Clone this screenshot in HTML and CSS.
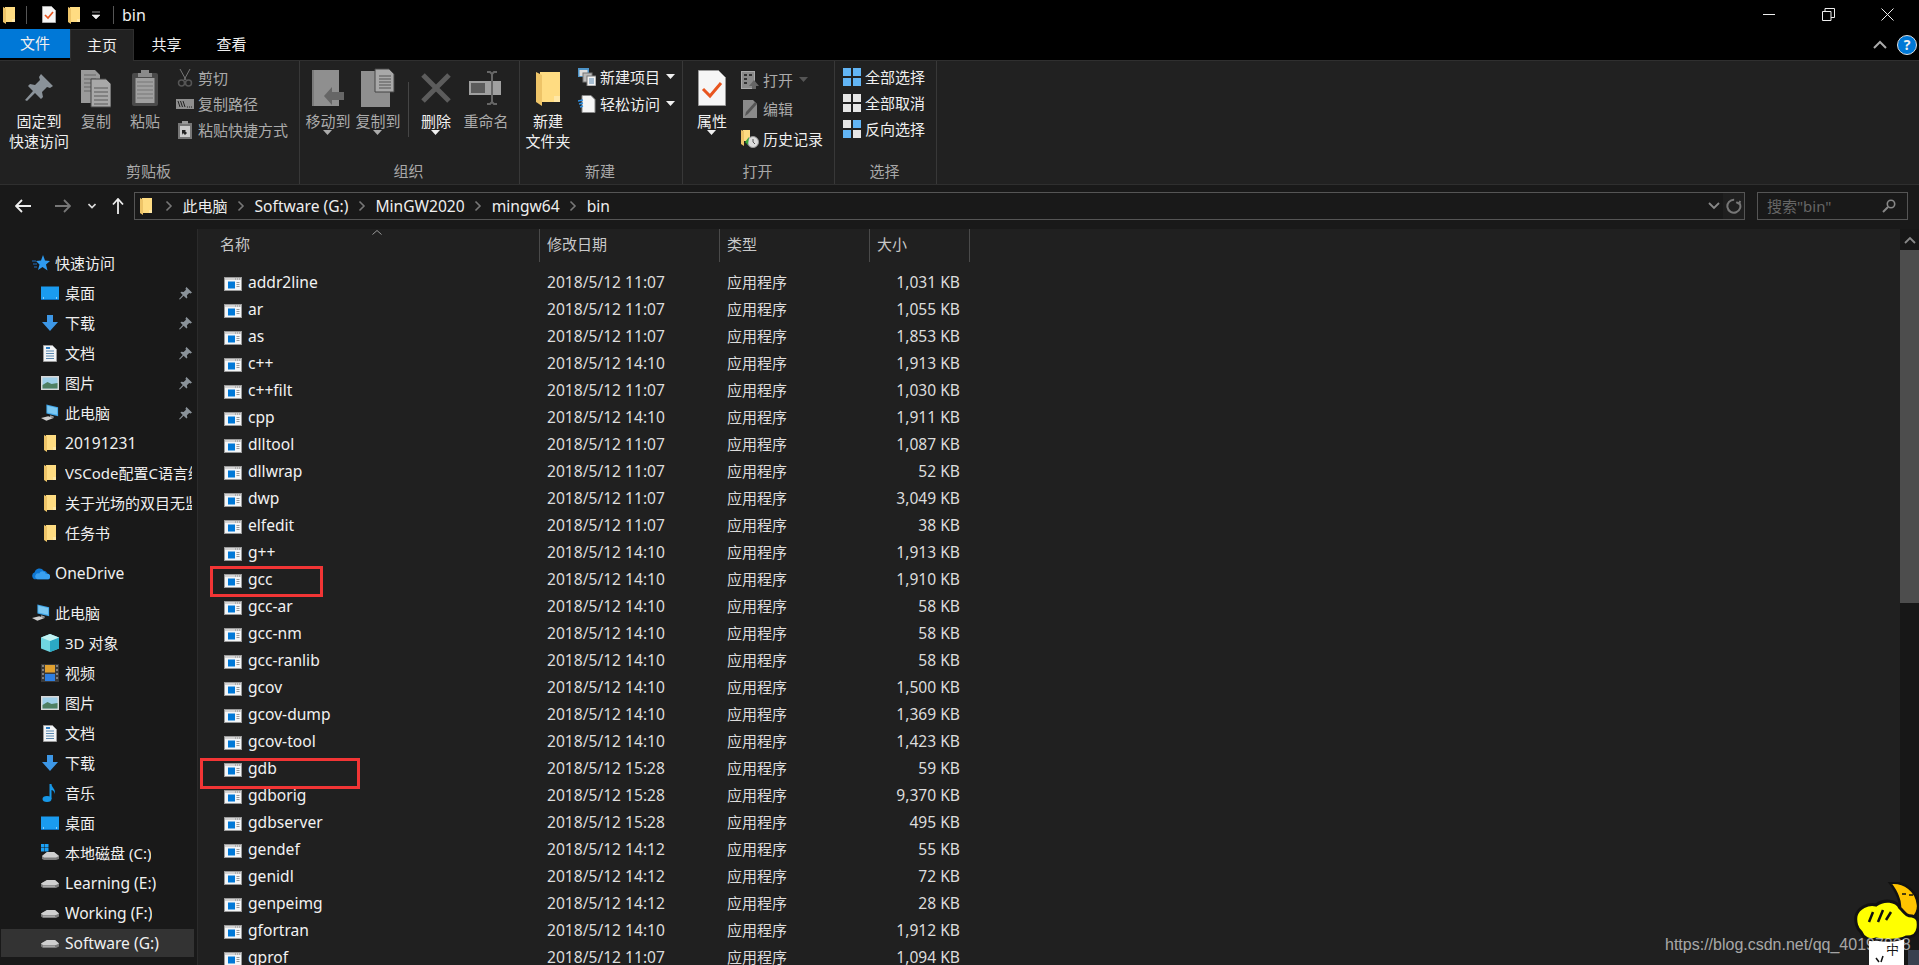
FILE: index.html
```html
<!DOCTYPE html>
<html lang="zh-CN">
<head>
    <meta charset="UTF-8">
    <title>bin</title>
    <link rel="stylesheet" href="styles.css">
</head>
<body>
    <svg class="defs" width="0" height="0">
        <symbol id="exe" viewBox="0 0 18 14">
            <rect x=".500" y=".500" width="17" height="13" fill="#f4f6f8" stroke="#9a9a9a"/>
            <rect x="1" y="1" width="16" height="2" fill="#d4d4d4"/>
            <path d="M11 2h1M13 2h1M15 2h1" stroke="#8a8a8a"/>
            <rect x="4" y="4.500" width="7" height="7" fill="#0078d7"/>
            <path d="M12.500 5.500h3M12.500 7.500h3M12.500 9.500h3" stroke="#9a9a9a"/>
        </symbol>
        <symbol id="folder" viewBox="0 0 12 18">
            <path d="M2 1h10v12h-1v3H2z" fill="#ffdc82"/>
            <path d="M0 1l3 1.500V18l-3-2z" fill="#eec468"/>
            <path d="M9 13h3v3H9z" fill="#ffe7a6"/>
        </symbol>
        <symbol id="pin" viewBox="0 0 14 14">
            <path d="M8 0l6 6-1.500 1L11 6.500 8.500 9l.5 2.500-1 1L5 9.500 1 13.500 0 13l4-4.500L1.500 6l1-1L5 5.500 7.500 3 7 1.500z" fill="#8a9299"/>
        </symbol>
        <symbol id="desktop" viewBox="0 0 18 14">
            <rect width="18" height="13" y="0.500" fill="#1a9bf0"/>
            <path d="M0 13h18v1H0z" fill="#0b6fc0"/>
            <path d="M2 12h1M15 12h1" stroke="#fff"/>
        </symbol>
        <symbol id="download" viewBox="0 0 16 16">
            <path d="M5 0h6v7h5l-8 9-8-9h5z" fill="#3d97e6"/>
        </symbol>
        <symbol id="doc" viewBox="0 0 14 17">
            <path d="M.5.500h9l4 4v12H.500z" fill="#f2f4f6" stroke="#9a9a9a"/>
            <path d="M3 6h8M3 8.500h8M3 11h8M3 13.500h8" stroke="#5a88b0"/>
            <path d="M3 3h4" stroke="#2f7fc4" stroke-width="2"/>
        </symbol>
        <symbol id="picture" viewBox="0 0 18 14">
            <rect width="18" height="14" fill="#d8d8d8"/>
            <rect x="1.500" y="1.500" width="15" height="11" fill="#9fd0ea"/>
            <path d="M1.500 9l5-3 4 2 6-1v5.500h-15z" fill="#4f7f63"/>
        </symbol>
        <symbol id="pc" viewBox="0 0 20 19">
            <path d="M6 0l13 3v10L6 10z" fill="#3fa5e8"/>
            <path d="M7 1.500l11 2.500v7.500L7 9z" fill="#7cc8f2"/>
            <path d="M0 15l8-2 6 2-8 3z" fill="#cfcfcf"/>
            <path d="M10 12l4 1v2l-4-1z" fill="#9a9a9a"/>
        </symbol>
        <symbol id="drive" viewBox="0 0 18 12">
            <path d="M0 6.500L6 3h8l4 3.500v3L15 11H2L0 9.500z" fill="#7c7c7c"/>
            <path d="M0 6.500L6 3h8l4 3.500-3 1.500H2z" fill="#cfcfcf"/>
            <path d="M2 8.500h12V10H2z" fill="#a8a8a8"/>
        </symbol>
        <symbol id="chev" viewBox="0 0 8 12">
            <path d="M1.500 1.500L6 6l-4.500 4.500" fill="none" stroke="#777" stroke-width="1.600"/>
        </symbol>
        <symbol id="caret" viewBox="0 0 9 5">
            <path d="M0 0h9L4.500 5z" fill="currentColor"/>
        </symbol>
        <symbol id="grid" viewBox="0 0 18 18">
            <rect width="8" height="8" fill="currentColor"/>
            <rect x="10" width="8" height="8" fill="currentColor"/>
            <rect y="10" width="8" height="8" fill="currentColor"/>
            <rect x="10" y="10" width="8" height="8" fill="currentColor"/>
        </symbol>
    </svg>

    <div class="titlebar">
        <svg class="qa-folder" width="12" height="18"><use href="#folder"/></svg>
        <span class="qa-sep"></span>
        <svg class="qa-doc" width="14" height="17" viewBox="0 0 14 17">
            <path d="M.500.500h9l4 4v12H.500z" fill="#f6f6f6" stroke="#aaa"/>
            <path d="M3 9l3 3 5-6" fill="none" stroke="#e8551f" stroke-width="1.700"/>
        </svg>
        <svg class="qa-folder2" width="12" height="18"><use href="#folder"/></svg>
        <svg class="qa-drop" width="8" height="8" viewBox="0 0 8 8">
            <path d="M0 1h8M0 4h8l-4 4z" fill="#eee" stroke="#eee" stroke-width=".6"/>
        </svg>
        <span class="qa-sep qa-sep-last"></span>
        <span class="window-title">bin</span>
        <div class="window-buttons">
            <span class="win-btn"><svg width="13" height="13"><path d="M0 6.500h12" stroke="#eee"/></svg></span>
            <span class="win-btn"><svg width="13" height="13"><path d="M.500 3.500h8.500v9H.500zM3 3.500V.500h9.500v9H9" fill="none" stroke="#eee"/></svg></span>
            <span class="win-btn"><svg width="13" height="13"><path d="M.500.500l12 12M12.500.500l-12 12" stroke="#eee"/></svg></span>
        </div>
    </div>

    <div class="tabs">
        <span class="tab tab-file">文件</span>
        <span class="tab tab-active">主页</span>
        <span class="tab">共享</span>
        <span class="tab">查看</span>
        <div class="tabs-right">
            <svg width="14" height="9" viewBox="0 0 14 9"><path d="M1 8l6-6 6 6" fill="none" stroke="#aaa" stroke-width="2"/></svg>
            <span class="help">?</span>
        </div>
    </div>

    <div class="ribbon">
        <div class="group group-clip">
            <div class="group-body">
                <div class="big-btn w-pin">
                    <svg class="big-icon" width="28" height="28"><use href="#pin"/></svg>
                    <span>固定到<br>快速访问</span>
                </div>
                <div class="big-btn w-copy muted">
                    <svg class="big-icon" width="30" height="38" viewBox="0 0 30 38">
                        <path d="M0 1h14l5 5v28H0z" fill="#9a9a9a"/>
                        <path d="M3 6h12M3 10h12M3 14h12M3 18h12M3 22h12" stroke="#666"/>
                        <path d="M10 10h15l5 5v23H10z" fill="#a8a8a8" stroke="#444"/>
                        <path d="M13 19h14M13 23h14M13 27h14M13 31h14M13 35h14" stroke="#5a5a5a"/>
                    </svg>
                    <span>复制</span>
                </div>
                <div class="big-btn w-paste muted">
                    <svg class="big-icon" width="26" height="36" viewBox="0 0 26 36">
                        <rect y="3" width="26" height="33" rx="2" fill="#4a4a4a"/>
                        <path d="M9 0h8v3h3v4H6V3h3z" fill="#8a8a8a"/>
                        <rect x="3.500" y="8" width="19" height="25" fill="#a0a0a0"/>
                        <path d="M5 12h16M5 16h16M5 20h16M5 24h16M5 28h16" stroke="#777"/>
                    </svg>
                    <span>粘贴</span>
                </div>
                <div class="small-col col-clip muted">
                    <div class="small-btn">
                        <svg width="18" height="18" viewBox="0 0 14 18"><path d="M2 0l6 11M12 0L6 11" stroke="#777"/><circle cx="3.500" cy="14" r="3" fill="none" stroke="#555" stroke-width="1.500"/><circle cx="10.500" cy="14" r="3" fill="none" stroke="#555" stroke-width="1.500"/></svg>
                        <span>剪切</span>
                    </div>
                    <div class="small-btn">
                        <svg width="18" height="18" viewBox="0 0 18 12"><rect y="1" width="18" height="10" fill="#8f8f8f"/><path d="M2 3l2 6M4.500 3l2 6M7 3l2 6" stroke="#222"/><path d="M11 9h1M13 9h1M15 9h1" stroke="#222"/></svg>
                        <span>复制路径</span>
                    </div>
                    <div class="small-btn">
                        <svg width="18" height="18" viewBox="0 0 14 18"><rect y="2" width="14" height="16" fill="#777"/><rect x="4" width="6" height="3" fill="#999"/><rect x="2" y="5" width="10" height="11" fill="#ccc"/><path d="M4 14V9h4l-1 1 2 2-2 2-2-2z" fill="#222"/></svg>
                        <span>粘贴快捷方式</span>
                    </div>
                </div>
            </div>
            <div class="group-label">剪贴板</div>
        </div>

        <div class="group group-org">
            <div class="group-body">
                <div class="big-btn w-move muted">
                    <svg class="big-icon" width="32" height="36" viewBox="0 0 32 36">
                        <rect width="27" height="36" fill="#8f8f8f"/>
                        <rect width="2" height="36" fill="#7a7a7a"/>
                        <path d="M12 26l8-9v5h12v8H20v5z" fill="#666"/>
                    </svg>
                    <span>移动到<br><svg class="drop" width="9" height="5"><use href="#caret"/></svg></span>
                </div>
                <div class="big-btn w-move muted">
                    <svg class="big-icon" width="34" height="38" viewBox="0 0 34 38">
                        <rect y="2" width="29" height="36" fill="#8f8f8f"/>
                        <path d="M14 0h14l5 5v18H14z" fill="#a8a8a8" stroke="#444"/>
                        <path d="M18 7h12M18 10h12M18 13h12M18 16h12M18 19h12" stroke="#555"/>
                    </svg>
                    <span>复制到<br><svg class="drop" width="9" height="5"><use href="#caret"/></svg></span>
                </div>
                <span class="inner-sep"></span>
                <div class="big-btn w-del">
                    <svg class="big-icon" width="30" height="30" viewBox="0 0 30 30">
                        <path d="M2 2l26 26M28 2L2 28" stroke="#5c5c5c" stroke-width="5"/>
                    </svg>
                    <span>删除<br><svg class="drop" width="9" height="5"><use href="#caret"/></svg></span>
                </div>
                <div class="big-btn w-ren muted">
                    <svg class="big-icon" width="34" height="34" viewBox="0 0 34 34">
                        <rect y="10" width="32" height="14" fill="#a0a0a0"/>
                        <rect x="2" y="12" width="14" height="10" fill="#5c5c5c"/>
                        <path d="M18 1h3l2 2 2-2h3M23 3v28M18 33h3l2-2 2 2h3" fill="none" stroke="#666" stroke-width="2"/>
                    </svg>
                    <span>重命名</span>
                </div>
            </div>
            <div class="group-label">组织</div>
        </div>

        <div class="group group-new">
            <div class="group-body">
                <div class="big-btn w-newfolder">
                    <svg class="big-icon" width="24" height="36"><use href="#folder"/></svg>
                    <span>新建<br>文件夹</span>
                </div>
                <div class="small-col col-new">
                    <div class="small-btn">
                        <svg width="18" height="18" viewBox="0 0 18 18"><rect width="11" height="9" fill="#4d94c9"/><rect x="1.500" y="2" width="8" height="6" fill="#ddd"/><rect x="5" y="5" width="9" height="9" fill="#bbb" stroke="#777"/><rect x="9" y="8" width="9" height="10" fill="#f4f4f4" stroke="#777"/><path d="M11 11h5M11 13h5M11 15h5" stroke="#5a88b0"/></svg>
                        <span>新建项目</span>
                        <svg class="inline-caret" width="9" height="5"><use href="#caret"/></svg>
                    </div>
                    <div class="small-btn">
                        <svg width="18" height="18" viewBox="0 0 18 18"><path d="M4 .500h9l4 4v13H4z" fill="#f6f6f6" stroke="#888"/><path d="M0 6l5-1M1 9l4-1M2 12l3-1" stroke="#2f8fe0" stroke-width="1.500"/></svg>
                        <span>轻松访问</span>
                        <svg class="inline-caret" width="9" height="5"><use href="#caret"/></svg>
                    </div>
                </div>
            </div>
            <div class="group-label">新建</div>
        </div>

        <div class="group group-open">
            <div class="group-body">
                <div class="big-btn w-prop">
                    <svg class="big-icon" width="28" height="36" viewBox="0 0 28 36">
                        <path d="M.500.500h20l7 7v28H.500z" fill="#f6f6f6" stroke="#999"/>
                        <path d="M5 19l7 7 11-13" fill="none" stroke="#e8551f" stroke-width="3"/>
                    </svg>
                    <span>属性<br><svg class="drop" width="9" height="5"><use href="#caret"/></svg></span>
                </div>
                <div class="small-col col-open">
                    <div class="small-btn muted">
                        <svg width="18" height="18" viewBox="0 0 18 18"><rect x=".500" y=".500" width="13" height="17" fill="#8a8a8a" stroke="#aaa"/><path d="M3 4h3M8 4h3M3 8h3M3 12h3" stroke="#333" stroke-width="2"/><path d="M8 15l5-6 5 6h-3v3h-4v-3z" fill="#666"/></svg>
                        <span>打开</span>
                        <svg class="inline-caret caret-dim" width="9" height="5"><use href="#caret"/></svg>
                    </div>
                    <div class="small-btn muted">
                        <svg width="18" height="18" viewBox="0 0 14 18"><path d="M0 0h10l4 4v14H0z" fill="#8a8a8a"/><path d="M2 16l1-4 9-10 2 2-9 10z" fill="#555"/></svg>
                        <span>编辑</span>
                    </div>
                    <div class="small-btn">
                        <svg width="18" height="18" viewBox="0 0 18 18"><path d="M2 0h7v11H2z" fill="#ffdc82"/><path d="M0 0l3 1v15l-3-2z" fill="#eec468"/><circle cx="12" cy="12" r="5.500" fill="#ddd" stroke="#999"/><path d="M8 7l-4 5 3 3z" fill="#3aa63a"/><path d="M12 9v3l2 2" stroke="#555" fill="none"/></svg>
                        <span>历史记录</span>
                    </div>
                </div>
            </div>
            <div class="group-label">打开</div>
        </div>

        <div class="group group-select">
            <div class="group-body">
                <div class="small-col col-select">
                    <div class="small-btn">
                        <svg class="sel-on" width="18" height="18"><use href="#grid"/></svg>
                        <span>全部选择</span>
                    </div>
                    <div class="small-btn">
                        <svg class="sel-off" width="18" height="18"><use href="#grid"/></svg>
                        <span>全部取消</span>
                    </div>
                    <div class="small-btn">
                        <svg width="18" height="18" viewBox="0 0 18 18"><rect width="8" height="8" fill="#e6e6e6"/><rect x="10" width="8" height="8" fill="#62b5f5"/><rect y="10" width="8" height="8" fill="#62b5f5"/><rect x="10" y="10" width="8" height="8" fill="#e6e6e6"/></svg>
                        <span>反向选择</span>
                    </div>
                </div>
            </div>
            <div class="group-label">选择</div>
        </div>
    </div>

    <div class="addressbar">
        <svg class="nav-arrow back" width="16" height="14" viewBox="0 0 16 14"><path d="M7 1L1 7l6 6M1 7h15" fill="none" stroke="#eee" stroke-width="1.800"/></svg>
        <svg class="nav-arrow forward" width="16" height="14" viewBox="0 0 16 14"><path d="M9 1l6 6-6 6M15 7H0" fill="none" stroke="#777" stroke-width="1.800"/></svg>
        <svg class="nav-arrow recent" width="8" height="6" viewBox="0 0 8 6"><path d="M.500 1L4 4.500 7.500 1" fill="none" stroke="#ddd" stroke-width="1.600"/></svg>
        <svg class="nav-arrow up" width="12" height="16" viewBox="0 0 12 16"><path d="M1 6.500L6 1l5 5.500M6 1v15" fill="none" stroke="#eee" stroke-width="1.800"/></svg>
        <div class="path-box">
            <svg class="path-folder" width="12" height="18"><use href="#folder"/></svg>
            <svg class="crumb-chev" width="8" height="12"><use href="#chev"/></svg>
            <span class="crumb">此电脑</span>
            <svg class="crumb-chev" width="8" height="12"><use href="#chev"/></svg>
            <span class="crumb en">Software (G:)</span>
            <svg class="crumb-chev" width="8" height="12"><use href="#chev"/></svg>
            <span class="crumb en">MinGW2020</span>
            <svg class="crumb-chev" width="8" height="12"><use href="#chev"/></svg>
            <span class="crumb en">mingw64</span>
            <svg class="crumb-chev" width="8" height="12"><use href="#chev"/></svg>
            <span class="crumb en">bin</span>
            <svg class="path-drop" width="12" height="8" viewBox="0 0 12 8"><path d="M1 1l5 5 5-5" fill="none" stroke="#888" stroke-width="1.800"/></svg>
            <span class="refresh">
                <svg width="16" height="16" viewBox="0 0 16 16"><path d="M5 2.500a6.500 6.500 0 1 0 6 0M11 .500v3h-3" fill="none" stroke="#777" stroke-width="2" transform="rotate(30 8 8)"/></svg>
            </span>
        </div>
        <div class="search-box">
            <span>搜索"bin"</span>
            <svg width="14" height="14" viewBox="0 0 14 14"><circle cx="9" cy="5" r="3.700" fill="none" stroke="#888" stroke-width="1.600"/><path d="M6 8l-5 5" stroke="#888" stroke-width="2"/></svg>
        </div>
    </div>

    <div class="main">
        <div class="nav">
            <div class="nav-row top"><svg width="18" height="16" viewBox="0 0 18 16"><path d="M11 0l2 5.500 5 .500-4 3.500 1.500 6L10.500 12 6 15l1.500-5.500L4 6l5-.500z" fill="#2f9bf0"/><path d="M0 6h4M1 9h4M2 12h3" stroke="#1c6fc0"/></svg><span>快速访问</span></div>
            <div class="nav-row"><svg width="18" height="14"><use href="#desktop"/></svg><span>桌面</span><svg class="nav-pin" width="13" height="13"><use href="#pin"/></svg></div>
            <div class="nav-row"><svg width="18" height="16"><use href="#download"/></svg><span>下载</span><svg class="nav-pin" width="13" height="13"><use href="#pin"/></svg></div>
            <div class="nav-row"><svg width="18" height="17"><use href="#doc"/></svg><span>文档</span><svg class="nav-pin" width="13" height="13"><use href="#pin"/></svg></div>
            <div class="nav-row"><svg width="18" height="14"><use href="#picture"/></svg><span>图片</span><svg class="nav-pin" width="13" height="13"><use href="#pin"/></svg></div>
            <div class="nav-row"><svg width="18" height="18"><use href="#pc"/></svg><span>此电脑</span><svg class="nav-pin" width="13" height="13"><use href="#pin"/></svg></div>
            <div class="nav-row"><svg width="18" height="18"><use href="#folder"/></svg><span class="en">20191231</span></div>
            <div class="nav-row"><svg width="18" height="18"><use href="#folder"/></svg><span>VSCode配置C语言编程环境</span></div>
            <div class="nav-row"><svg width="18" height="18"><use href="#folder"/></svg><span>关于光场的双目无监督深度估计</span></div>
            <div class="nav-row"><svg width="18" height="18"><use href="#folder"/></svg><span>任务书</span></div>

            <div class="nav-row top nav-gap"><svg width="18" height="13" viewBox="0 0 20 13"><path d="M4 13a4 4 0 0 1-1-7.800 5.500 5.500 0 0 1 10-1.700A4.500 4.500 0 0 1 17 7a3 3 0 0 1 0 6z" fill="#0f78d4"/><path d="M8 6.500a4 4 0 0 1 7.500.500A3 3 0 0 1 20 10a3 3 0 0 1-3 3H6a3 3 0 0 1 2-6.500z" fill="#3aa0f0"/></svg><span class="en">OneDrive</span></div>

            <div class="nav-row top nav-gap"><svg width="18" height="18"><use href="#pc"/></svg><span>此电脑</span></div>
            <div class="nav-row"><svg width="18" height="18" viewBox="0 0 18 18"><path d="M9 0l9 3.500v11L9 18 0 14.500v-11z" fill="#6fd5e0"/><path d="M9 7l9-3.500v11L9 18z" fill="#2ba8c4"/><path d="M9 0l9 3.500L9 7 0 3.500z" fill="#c2f2f2"/></svg><span>3D 对象</span></div>
            <div class="nav-row"><svg width="18" height="18" viewBox="0 0 18 18"><rect width="18" height="18" fill="#3a3a3a"/><rect x="4" y="1" width="10" height="7.500" fill="#e0a030"/><rect x="4" y="10" width="10" height="7" fill="#2f7fe0"/><path d="M1 2h2M1 6h2M1 10h2M1 14h2M15 2h2M15 6h2M15 10h2M15 14h2" stroke="#999" stroke-width="1.500"/></svg><span>视频</span></div>
            <div class="nav-row"><svg width="18" height="14"><use href="#picture"/></svg><span>图片</span></div>
            <div class="nav-row"><svg width="18" height="17"><use href="#doc"/></svg><span>文档</span></div>
            <div class="nav-row"><svg width="18" height="16"><use href="#download"/></svg><span>下载</span></div>
            <div class="nav-row"><svg width="18" height="18" viewBox="0 0 18 18"><ellipse cx="6" cy="15" rx="4.500" ry="3" fill="#1798e8"/><path d="M8.500 15V0h2c0 4 5 5 3 10 0-3-2-4-3-4v9z" fill="#1798e8"/></svg><span>音乐</span></div>
            <div class="nav-row"><svg width="18" height="14"><use href="#desktop"/></svg><span>桌面</span></div>
            <div class="nav-row"><svg width="18" height="18" viewBox="0 0 18 18"><path d="M0 0h3.500v3.500H0zM4 0h3.500v3.500H4zM0 4h3.500v3.500H0zM4 4h3.500v3.500H4z" fill="#1aa0f5"/><path d="M1 12l5-4h7l5 4v3l-3 1H3l-2-1z" fill="#7c7c7c"/><path d="M1 12l5-4h7l5 4-3 1.500H3z" fill="#cfcfcf"/></svg><span>本地磁盘 (C:)</span></div>
            <div class="nav-row"><svg width="18" height="12"><use href="#drive"/></svg><span class="en">Learning (E:)</span></div>
            <div class="nav-row"><svg width="18" height="12"><use href="#drive"/></svg><span class="en">Working (F:)</span></div>
            <div class="nav-row selected"><svg width="18" height="12"><use href="#drive"/></svg><span class="en">Software (G:)</span></div>
        </div>

        <div class="files">
            <div class="list-head">
                <div class="head-cell head-name">名称<svg class="sort-mark" width="10" height="5" viewBox="0 0 10 5"><path d="M.500 4.500L5 .500l4.500 4" fill="none" stroke="#999"/></svg></div>
                <div class="head-cell">修改日期</div>
                <div class="head-cell">类型</div>
                <div class="head-cell">大小</div>
            </div>
            <div class="list-body">
                <div class="file-row"><span class="name"><svg width="18" height="14"><use href="#exe"/></svg>addr2line</span><span class="date">2018/5/12 11:07</span><span>应用程序</span><span class="size">1,031 KB</span></div>
                <div class="file-row"><span class="name"><svg width="18" height="14"><use href="#exe"/></svg>ar</span><span class="date">2018/5/12 11:07</span><span>应用程序</span><span class="size">1,055 KB</span></div>
                <div class="file-row"><span class="name"><svg width="18" height="14"><use href="#exe"/></svg>as</span><span class="date">2018/5/12 11:07</span><span>应用程序</span><span class="size">1,853 KB</span></div>
                <div class="file-row"><span class="name"><svg width="18" height="14"><use href="#exe"/></svg>c++</span><span class="date">2018/5/12 14:10</span><span>应用程序</span><span class="size">1,913 KB</span></div>
                <div class="file-row"><span class="name"><svg width="18" height="14"><use href="#exe"/></svg>c++filt</span><span class="date">2018/5/12 11:07</span><span>应用程序</span><span class="size">1,030 KB</span></div>
                <div class="file-row"><span class="name"><svg width="18" height="14"><use href="#exe"/></svg>cpp</span><span class="date">2018/5/12 14:10</span><span>应用程序</span><span class="size">1,911 KB</span></div>
                <div class="file-row"><span class="name"><svg width="18" height="14"><use href="#exe"/></svg>dlltool</span><span class="date">2018/5/12 11:07</span><span>应用程序</span><span class="size">1,087 KB</span></div>
                <div class="file-row"><span class="name"><svg width="18" height="14"><use href="#exe"/></svg>dllwrap</span><span class="date">2018/5/12 11:07</span><span>应用程序</span><span class="size">52 KB</span></div>
                <div class="file-row"><span class="name"><svg width="18" height="14"><use href="#exe"/></svg>dwp</span><span class="date">2018/5/12 11:07</span><span>应用程序</span><span class="size">3,049 KB</span></div>
                <div class="file-row"><span class="name"><svg width="18" height="14"><use href="#exe"/></svg>elfedit</span><span class="date">2018/5/12 11:07</span><span>应用程序</span><span class="size">38 KB</span></div>
                <div class="file-row"><span class="name"><svg width="18" height="14"><use href="#exe"/></svg>g++</span><span class="date">2018/5/12 14:10</span><span>应用程序</span><span class="size">1,913 KB</span></div>
                <div class="file-row"><span class="name"><svg width="18" height="14"><use href="#exe"/></svg>gcc</span><span class="date">2018/5/12 14:10</span><span>应用程序</span><span class="size">1,910 KB</span></div>
                <div class="file-row"><span class="name"><svg width="18" height="14"><use href="#exe"/></svg>gcc-ar</span><span class="date">2018/5/12 14:10</span><span>应用程序</span><span class="size">58 KB</span></div>
                <div class="file-row"><span class="name"><svg width="18" height="14"><use href="#exe"/></svg>gcc-nm</span><span class="date">2018/5/12 14:10</span><span>应用程序</span><span class="size">58 KB</span></div>
                <div class="file-row"><span class="name"><svg width="18" height="14"><use href="#exe"/></svg>gcc-ranlib</span><span class="date">2018/5/12 14:10</span><span>应用程序</span><span class="size">58 KB</span></div>
                <div class="file-row"><span class="name"><svg width="18" height="14"><use href="#exe"/></svg>gcov</span><span class="date">2018/5/12 14:10</span><span>应用程序</span><span class="size">1,500 KB</span></div>
                <div class="file-row"><span class="name"><svg width="18" height="14"><use href="#exe"/></svg>gcov-dump</span><span class="date">2018/5/12 14:10</span><span>应用程序</span><span class="size">1,369 KB</span></div>
                <div class="file-row"><span class="name"><svg width="18" height="14"><use href="#exe"/></svg>gcov-tool</span><span class="date">2018/5/12 14:10</span><span>应用程序</span><span class="size">1,423 KB</span></div>
                <div class="file-row"><span class="name"><svg width="18" height="14"><use href="#exe"/></svg>gdb</span><span class="date">2018/5/12 15:28</span><span>应用程序</span><span class="size">59 KB</span></div>
                <div class="file-row"><span class="name"><svg width="18" height="14"><use href="#exe"/></svg>gdborig</span><span class="date">2018/5/12 15:28</span><span>应用程序</span><span class="size">9,370 KB</span></div>
                <div class="file-row"><span class="name"><svg width="18" height="14"><use href="#exe"/></svg>gdbserver</span><span class="date">2018/5/12 15:28</span><span>应用程序</span><span class="size">495 KB</span></div>
                <div class="file-row"><span class="name"><svg width="18" height="14"><use href="#exe"/></svg>gendef</span><span class="date">2018/5/12 14:12</span><span>应用程序</span><span class="size">55 KB</span></div>
                <div class="file-row"><span class="name"><svg width="18" height="14"><use href="#exe"/></svg>genidl</span><span class="date">2018/5/12 14:12</span><span>应用程序</span><span class="size">72 KB</span></div>
                <div class="file-row"><span class="name"><svg width="18" height="14"><use href="#exe"/></svg>genpeimg</span><span class="date">2018/5/12 14:12</span><span>应用程序</span><span class="size">28 KB</span></div>
                <div class="file-row"><span class="name"><svg width="18" height="14"><use href="#exe"/></svg>gfortran</span><span class="date">2018/5/12 14:10</span><span>应用程序</span><span class="size">1,912 KB</span></div>
                <div class="file-row"><span class="name"><svg width="18" height="14"><use href="#exe"/></svg>gprof</span><span class="date">2018/5/12 11:07</span><span>应用程序</span><span class="size">1,094 KB</span></div>
            </div>
            <!-- annotations drawn on the screenshot -->
            <div class="mark mark-gcc"></div>
            <div class="mark mark-gdb"></div>
        </div>

        <div class="scrollbar">
            <div class="scroll-up"><svg width="12" height="8" viewBox="0 0 12 8"><path d="M1 7l5-5 5 5" fill="none" stroke="#888" stroke-width="1.800"/></svg></div>
            <div class="scroll-thumb"></div>
        </div>
    </div>

    <svg class="mascot" width="66" height="83" viewBox="0 0 66 83">
        <rect x="55" y="68" width="11" height="15" fill="#39404f"/>
        <rect x="16" y="54" width="35" height="29" fill="#fff"/>
        <path d="M23 76l3 4M30 74l-2 6" stroke="#111" stroke-width="1.500"/>
        <path d="M37 1c14-2 27 8 28 22 1 10-8 18-20 20l-8-4c8-3 13-12 8-24-2-6-5-10-8-14z" fill="#ffc400" stroke="#111" stroke-width="2.500"/>
        <path d="M3 34c2-8 12-13 20-11 8-6 20-5 24 3 5 5 6 8 12 8 5 1 7 4 6 12-1 7-5 9-12 9-8 4-22 4-30 2-6 2-13-1-15-7-4-3-6-10-5-16z" fill="#ffff00" stroke="#111" stroke-width="3"/>
        <path d="M20 30l-4 10M30 28l-5 12M38 30l-5 8" stroke="#111" stroke-width="2.500"/>
        <path d="M49 12h4M56 13h4" stroke="#111" stroke-width="1.500"/>
    </svg>
    <div class="mascot-char">中</div>
    <div class="watermark">https://blog.csdn.net/qq_40197838</div>
</body>
</html>
```

FILE: styles.css
```css
* {
    margin: 0;
    padding: 0;
    box-sizing: border-box;
}

body {
    position: relative;
    width: 1919px;
    height: 965px;
    overflow: hidden;
    background: #000;
    color: #f0f0f0;
    font-family: "Noto Sans", "Noto Sans CJK SC", sans-serif;
    font-size: 15px;
    line-height: 20px;
}

svg {
    display: block;
    flex-shrink: 0;
}

.defs {
    position: absolute;
}

/* latin text runs a bit wider than the cjk size */
.en {
    font-size: 15.600px;
}

/* title bar */
.titlebar {
    display: flex;
    align-items: center;
    height: 29px;
    padding-left: 3px;
}

.qa-sep {
    width: 1px;
    height: 18px;
    margin-left: 11px;
    background: #555;
}

.qa-doc {
    margin-left: 15px;
}

.qa-folder2 {
    margin-left: 12px;
}

.qa-drop {
    margin-left: 12px;
}

.qa-sep-last {
    margin-left: 13px;
}

.window-title {
    margin-left: 8px;
    font-size: 16px;
}

.window-buttons {
    display: flex;
    margin-left: auto;
    padding-right: 2px;
}

.win-btn {
    display: flex;
    justify-content: center;
    align-items: center;
    width: 59px;
    height: 29px;
}

/* ribbon tabs */
.tabs {
    display: flex;
    height: 32px;
    border-bottom: 1px solid #2f2f2f;
}

.tab {
    width: 65px;
    height: 31px;
    line-height: 30px;
    text-align: center;
}

.tab-file {
    width: 70px;
    height: 29px;
    line-height: 29px;
    background: #0078d7;
}

.tab-active {
    width: 64px;
    height: 32px;
    background: #212121;
    border: 1px solid #2f2f2f;
    border-bottom: none;
}

.tabs-right {
    display: flex;
    align-items: center;
    gap: 10px;
    margin-left: auto;
    padding-right: 2px;
}

.help {
    width: 20px;
    height: 20px;
    border-radius: 50%;
    background: #0078d7;
    border: 1px solid #ddd;
    font-size: 14px;
    font-weight: 700;
    line-height: 18px;
    text-align: center;
}

/* ribbon */
.ribbon {
    display: flex;
    height: 123px;
    background: #212121;
}

.group {
    display: flex;
    flex-direction: column;
    border-right: 1px solid #383838;
}

.group-clip { width: 300px; }
.group-org { width: 220px; }
.group-new { width: 163px; }
.group-open { width: 152px; }
.group-select { width: 102px; }

.group-body {
    display: flex;
    flex: 1;
}

.group-org .group-body {
    padding-left: 3px;
}

.group-label {
    height: 26px;
    padding-right: 2px;
    color: #a8a8a8;
    line-height: 26px;
    text-align: center;
}

.big-btn {
    display: flex;
    flex-direction: column;
    align-items: center;
    flex-shrink: 0;
    padding-top: 6px;
    text-align: center;
    white-space: nowrap;
}

.big-icon {
    height: 42px;
}

.big-btn > span {
    margin-top: 2px;
}

.w-pin { width: 78px; }
.w-copy { width: 36px; }
.w-paste { width: 62px; }
.w-move { width: 50px; }
.w-del { width: 54px; }
.w-ren { width: 46px; }
.w-newfolder { width: 56px; }
.w-prop { width: 58px; }

.muted {
    color: #ababab;
}

.drop {
    margin: -1px auto 0;
}

.inner-sep {
    width: 1px;
    height: 55px;
    margin: 21px 0 0 5px;
    background: #454545;
}

.small-col {
    display: flex;
    flex-direction: column;
    white-space: nowrap;
}

.col-clip {
    padding-top: 4px;
}

.col-clip .small-btn,
.col-select .small-btn {
    height: 26px;
}

.col-new {
    margin-left: 2px;
    padding-top: 2px;
}

.col-new .small-btn {
    height: 27px;
}

.col-open {
    padding-top: 4px;
}

.col-open .small-btn {
    height: 29.500px;
}

.col-select {
    padding: 3px 0 0 8px;
}

.small-btn {
    display: flex;
    align-items: center;
    gap: 4px;
}

.inline-caret {
    margin-left: 2px;
}

.caret-dim {
    color: #555;
}

.sel-on {
    color: #62b5f5;
}

.sel-off {
    color: #e6e6e6;
}

/* address bar */
.addressbar {
    display: flex;
    align-items: flex-start;
    height: 45px;
    padding-top: 7px;
    background: #191919;
    border-top: 1px solid #2f2f2f;
}

.nav-arrow {
    margin-top: 7px;
}

.back { margin-left: 15px; }
.forward { margin-left: 24px; }
.recent { margin: 11px 0 0 17px; }
.up { margin: 6px 0 0 16px; }

.path-box {
    display: flex;
    align-items: center;
    width: 1611px;
    height: 28px;
    margin-left: 10px;
    padding-left: 5px;
    background: #191919;
    border: 1px solid #555;
}

.path-folder {
    margin-right: 3.500px;
}

.crumb-chev {
    margin: 0 9.500px;
}

.crumb {
    color: #eee;
}

.path-drop {
    margin-left: auto;
    margin-right: 3px;
}

.refresh {
    display: flex;
    justify-content: center;
    align-items: center;
    width: 21px;
    height: 26px;
    background: #1f1f1f;
}

.search-box {
    display: flex;
    justify-content: space-between;
    align-items: center;
    width: 151px;
    height: 28px;
    margin-left: 12px;
    padding: 0 11px 0 9px;
    border: 1px solid #555;
    color: #666;
}

/* main area */
.main {
    display: flex;
    height: 736px;
}

.nav {
    flex-shrink: 0;
    width: 198px;
    padding-top: 19px;
    overflow: hidden;
    background: #191919;
    border-right: 1px solid #2b2b2b;
}

.nav-row {
    display: flex;
    align-items: center;
    gap: 6px;
    height: 30px;
    padding: 0 5px 0 41px;
    white-space: nowrap;
}

.nav-row span {
    overflow: hidden;
    flex: 0 1 auto;
    min-width: 0;
}

.nav-row.top {
    gap: 5px;
    padding-left: 32px;
}

.nav-gap {
    margin-top: 10px;
}

.nav-pin {
    margin-left: auto;
}

.selected {
    height: 28px;
    margin: 1px 3px 1px 1px;
    padding-left: 40px;
    background: #333;
}

.files {
    position: relative;
    flex: 1;
    overflow: hidden;
    background: #202020;
}

.list-head,
.file-row {
    display: grid;
    grid-template-columns: 342px 180px 150px 100px;
}

.list-head {
    height: 33px;
    color: #c8c8c8;
}

.head-cell {
    padding-left: 7px;
    line-height: 31px;
    border-right: 1px solid #4a4a4a;
}

.head-name {
    position: relative;
    padding-left: 22px;
}

.sort-mark {
    position: absolute;
    top: 1px;
    left: 174px;
}

.list-body {
    padding-top: 8px;
}

.file-row {
    height: 27px;
    color: #dcdcdc;
    line-height: 25px;
}

.file-row span {
    padding-left: 7px;
}

.file-row .name {
    display: flex;
    align-items: center;
    gap: 6px;
    padding: 0 0 2px 26px;
    color: #f2f2f2;
    font-size: 15.600px;
}

.file-row .name svg {
    margin-top: 2px;
}

.file-row .date {
    font-size: 15.600px;
}

.file-row .size {
    padding-right: 10px;
    font-size: 15.600px;
    text-align: right;
}

.mark {
    position: absolute;
    border: 3px solid #f23535;
}

.mark-gcc {
    top: 337px;
    left: 12px;
    width: 113px;
    height: 31px;
}

.mark-gdb {
    top: 529px;
    left: 2px;
    width: 160px;
    height: 31px;
}

.scrollbar {
    flex-shrink: 0;
    width: 19px;
    background: #171717;
}

.scroll-up {
    display: flex;
    justify-content: center;
    align-items: center;
    height: 21px;
}

.scroll-thumb {
    height: 353px;
    background: #4d4d4d;
}

/* watermark pasted over the screenshot */
.mascot {
    position: absolute;
    top: 882px;
    left: 1853px;
}

.watermark {
    position: absolute;
    top: 935px;
    left: 1665px;
    color: rgba(255, 255, 255, 0.62);
    font-family: "Liberation Sans", sans-serif;
    font-size: 16px;
}

.mascot-char {
    position: absolute;
    top: 939px;
    left: 1886px;
    color: #111;
    font-size: 13px;
}
```
